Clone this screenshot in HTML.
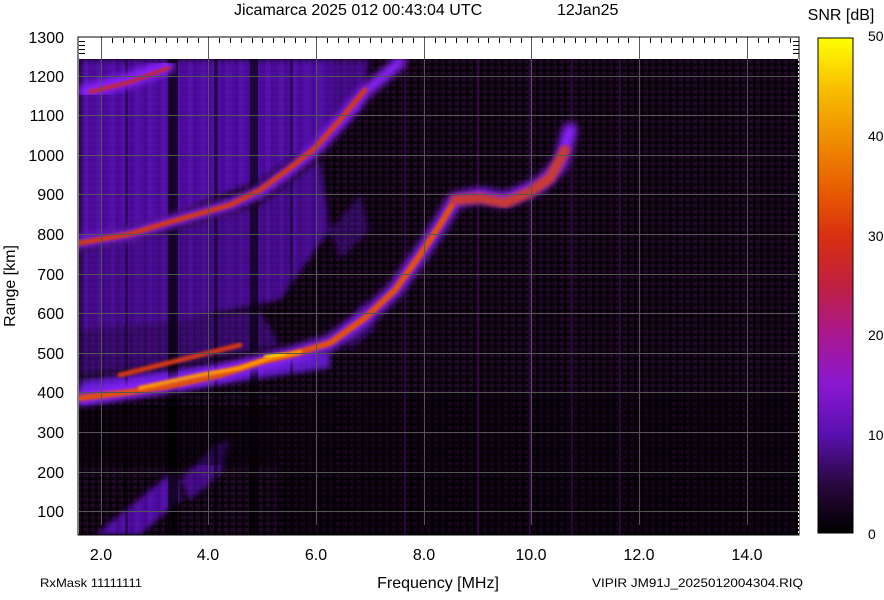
<!DOCTYPE html>
<html><head><meta charset="utf-8"><style>
body{margin:0;background:#fff;width:884px;height:595px;overflow:hidden;font-family:"Liberation Sans",sans-serif}
</style></head><body>
<svg width="884" height="595" xmlns="http://www.w3.org/2000/svg" font-family="Liberation Sans, sans-serif">
<defs>
<linearGradient id="cb" x1="0" y1="1" x2="0" y2="0">
<stop offset="0" stop-color="#000"/>
<stop offset="0.1" stop-color="#2a0840"/>
<stop offset="0.2" stop-color="#5a10b0"/>
<stop offset="0.3" stop-color="#8a18d0"/>
<stop offset="0.4" stop-color="#a81890"/>
<stop offset="0.5" stop-color="#c02040"/>
<stop offset="0.6" stop-color="#d83010"/>
<stop offset="0.7" stop-color="#e86000"/>
<stop offset="0.8" stop-color="#f09000"/>
<stop offset="0.9" stop-color="#f8c000"/>
<stop offset="1" stop-color="#ffff00"/>
</linearGradient>
<pattern id="noise" width="7" height="6" patternUnits="userSpaceOnUse">
<rect width="7" height="6" fill="#0c040e"/>
<rect x="0" y="0" width="3" height="3" fill="#24082a"/>
<rect x="4" y="3" width="2" height="3" fill="#000"/>
<rect x="3" y="0" width="1" height="6" fill="#1a0620"/>
</pattern>
<pattern id="vs" width="13" height="5" patternUnits="userSpaceOnUse">
<rect width="13" height="5" fill="#6a10e0"/>
<rect x="2" width="2" height="5" fill="#2a0660"/>
<rect x="7" width="1" height="5" fill="#8a30ff"/>
<rect x="10" y="0" width="2" height="3" fill="#3a0880"/>
</pattern>
<filter id="b1"><feGaussianBlur stdDeviation="1.2"/></filter>
<filter id="b2"><feGaussianBlur stdDeviation="2"/></filter>
<filter id="b3"><feGaussianBlur stdDeviation="3"/></filter>
<filter id="b4"><feGaussianBlur stdDeviation="4"/></filter>
<clipPath id="pc"><rect x="79" y="59" width="720" height="476"/></clipPath>
</defs>

<text x="234" y="15" font-size="16">Jicamarca 2025 012 00:43:04 UTC</text>
<text x="557" y="15" font-size="16">12Jan25</text>

<rect x="78" y="37" width="721" height="498" fill="#fff" stroke="#000"/>
<rect x="79" y="59" width="720" height="476" fill="url(#noise)"/>
<g clip-path="url(#pc)">
<g opacity="0.75" filter="url(#b3)">
<path d="M80,60 L330,60 L330,130 L260,180 L170,215 L80,240 Z" fill="url(#vs)"/>
<path d="M80,252 L170,232 L260,205 L320,160 L330,230 L280,300 L180,320 L80,330 Z" fill="url(#vs)" opacity="0.85"/>
<path d="M80,330 L260,310 L280,345 L180,365 L80,375 Z" fill="url(#vs)" opacity="0.6"/>
<path d="M300,60 L370,60 L360,110 L300,165 Z" fill="url(#vs)" opacity="0.8"/>
<path d="M80,380 L330,352 L330,368 L80,405 Z" fill="#7a20ff"/>
<path d="M95,535 L150,490 L175,470 L180,500 L140,535 Z" fill="url(#vs)"/>
<path d="M180,480 L215,445 L230,440 L220,475 L190,500 Z" fill="url(#vs)" opacity="0.8"/>
<path d="M330,230 L360,195 L370,230 L340,260 Z" fill="url(#vs)" opacity="0.5"/>
<path d="M340,330 L365,300 L375,330 L350,350 Z" fill="url(#vs)" opacity="0.5"/>
</g>
<rect x="168" y="59" width="10" height="476" fill="#000" opacity="0.7"/>
<rect x="250" y="59" width="8" height="476" fill="#000" opacity="0.65"/>
<rect x="214" y="59" width="4" height="476" fill="#000" opacity="0.5"/>
<rect x="125" y="59" width="3" height="476" fill="#000" opacity="0.4"/>
<rect x="290" y="59" width="3" height="476" fill="#000" opacity="0.4"/>
<rect x="280" y="395" width="520" height="140" fill="#000" opacity="0.35"/>
<rect x="79" y="405" width="200" height="60" fill="#000" opacity="0.4"/>
<g stroke="#3a0c50" stroke-width="2" opacity="0.7">
<line x1="478" y1="59" x2="478" y2="535"/><line x1="530" y1="59" x2="530" y2="535"/>
<line x1="572" y1="59" x2="572" y2="535"/><line x1="620" y1="59" x2="620" y2="535"/>
<line x1="405" y1="59" x2="405" y2="535"/>
</g>
<g fill="none" stroke-linecap="round" stroke-linejoin="round">
<polyline filter="url(#b4)" stroke="#8a20ff" stroke-width="14" points="85,92 130,80 168,66"/>
<polyline filter="url(#b1)" stroke="#c02838" stroke-width="4" points="90,92 130,82 168,68"/>
<polyline filter="url(#b4)" stroke="#8a20ff" stroke-width="12" points="80,243 130,234 170,222 230,205 260,192 290,170 315,150 340,122 365,92 400,62"/>
<polyline filter="url(#b1)" stroke="#d03818" stroke-width="5" points="80,243 130,234 170,222 230,205 260,190 290,168 315,148 340,120 365,90"/>
<polyline filter="url(#b4)" stroke="#8a20ff" stroke-width="14" points="80,398 130,390 170,384 220,373 260,362 290,355 330,343 365,318 395,290 420,255 440,225 455,200 480,195 505,200 540,185 560,165 570,130"/>
<polyline filter="url(#b1)" stroke="#e05010" stroke-width="6" points="80,398 130,392 170,386 220,375 260,362 290,355 330,343 365,318 395,290 420,255 440,225 452,205"/>
<polyline filter="url(#b1)" stroke="#ff9a00" stroke-width="4" points="140,388 200,375 240,368 270,358 300,352"/>
<polyline filter="url(#b1)" stroke="#ffd800" stroke-width="3" points="265,357 285,353"/>
<polyline filter="url(#b1)" stroke="#d03818" stroke-width="5" points="120,375 200,355 240,345"/>
<polyline filter="url(#b2)" stroke="#c83a30" stroke-width="10" points="455,200 480,198 505,203 530,192 550,178 565,150"/>
</g>
</g>
<g stroke="#555" stroke-width="1">
<line x1="79" y1="76.5" x2="799" y2="76.5"/><line x1="79" y1="115.5" x2="799" y2="115.5"/>
<line x1="79" y1="155.5" x2="799" y2="155.5"/><line x1="79" y1="194.5" x2="799" y2="194.5"/>
<line x1="79" y1="234.5" x2="799" y2="234.5"/><line x1="79" y1="274.5" x2="799" y2="274.5"/>
<line x1="79" y1="313.5" x2="799" y2="313.5"/><line x1="79" y1="353.5" x2="799" y2="353.5"/>
<line x1="79" y1="392.5" x2="799" y2="392.5"/><line x1="79" y1="432.5" x2="799" y2="432.5"/>
<line x1="79" y1="472.5" x2="799" y2="472.5"/><line x1="79" y1="511.5" x2="799" y2="511.5"/>
<line x1="101.5" y1="37" x2="101.5" y2="525"/><line x1="208.5" y1="37" x2="208.5" y2="525"/>
<line x1="316.5" y1="37" x2="316.5" y2="525"/><line x1="424.5" y1="37" x2="424.5" y2="525"/>
<line x1="531.5" y1="37" x2="531.5" y2="525"/><line x1="639.5" y1="37" x2="639.5" y2="525"/>
<line x1="747.5" y1="37" x2="747.5" y2="525"/>
</g>
<g stroke="#000" stroke-width="1">
<path d="M112.5,38v5M123.5,38v5M134.5,38v5M144.5,38v5M155.5,38v5M166.5,38v5M177.5,38v5M187.5,38v5M198.5,38v5M219.5,38v5M230.5,38v5M241.5,38v5M252.5,38v5M262.5,38v5M273.5,38v5M284.5,38v5M295.5,38v5M305.5,38v5M327.5,38v5M338.5,38v5M348.5,38v5M359.5,38v5M370.5,38v5M381.5,38v5M392.5,38v5M402.5,38v5M413.5,38v5M435.5,38v5M445.5,38v5M456.5,38v5M467.5,38v5M478.5,38v5M488.5,38v5M499.5,38v5M510.5,38v5M521.5,38v5M542.5,38v5M553.5,38v5M564.5,38v5M575.5,38v5M585.5,38v5M596.5,38v5M607.5,38v5M618.5,38v5M628.5,38v5M650.5,38v5M661.5,38v5M671.5,38v5M682.5,38v5M693.5,38v5M704.5,38v5M714.5,38v5M725.5,38v5M736.5,38v5M758.5,38v5M768.5,38v5M779.5,38v5M790.5,38v5"/>
<path d="M79,41.5h6M79,45.5h6M79,49.5h6M79,53.5h6M793,41.5h6M793,45.5h6M793,49.5h6M793,53.5h6"/>
</g>
<rect x="78" y="37" width="721" height="498" fill="none" stroke="#000"/>
<line x1="798.5" y1="59" x2="798.5" y2="535" stroke="#fff" stroke-dasharray="2,2"/>

<g font-size="16" text-anchor="end">
<text x="64" y="43">1300</text><text x="64" y="82">1200</text><text x="64" y="121">1100</text>
<text x="64" y="161">1000</text><text x="64" y="200">900</text><text x="64" y="240">800</text>
<text x="64" y="280">700</text><text x="64" y="319">600</text><text x="64" y="359">500</text>
<text x="64" y="398">400</text><text x="64" y="438">300</text><text x="64" y="478">200</text>
<text x="64" y="517">100</text>
</g>
<text transform="translate(15,286) rotate(-90)" font-size="16" text-anchor="middle">Range [km]</text>
<g font-size="16" text-anchor="middle">
<text x="101" y="560">2.0</text><text x="208" y="560">4.0</text><text x="316" y="560">6.0</text>
<text x="424" y="560">8.0</text><text x="531" y="560">10.0</text><text x="639" y="560">12.0</text>
<text x="747" y="560">14.0</text>
<text x="438" y="588">Frequency [MHz]</text>
</g>
<text x="40" y="587" font-size="12" textLength="102" lengthAdjust="spacingAndGlyphs">RxMask 11111111</text>
<text x="592" y="587" font-size="12" textLength="211" lengthAdjust="spacingAndGlyphs">VIPIR  JM91J_2025012004304.RIQ</text>

<text x="841" y="20" font-size="16" text-anchor="middle">SNR [dB]</text>
<rect x="818" y="38" width="35" height="495" fill="url(#cb)" stroke="#000"/>
<g font-size="14">
<text x="868" y="41">50</text><text x="868" y="141">40</text><text x="868" y="241">30</text>
<text x="868" y="340">20</text><text x="868" y="440">10</text><text x="868" y="539">0</text>
</g>
</svg>
</body></html>
